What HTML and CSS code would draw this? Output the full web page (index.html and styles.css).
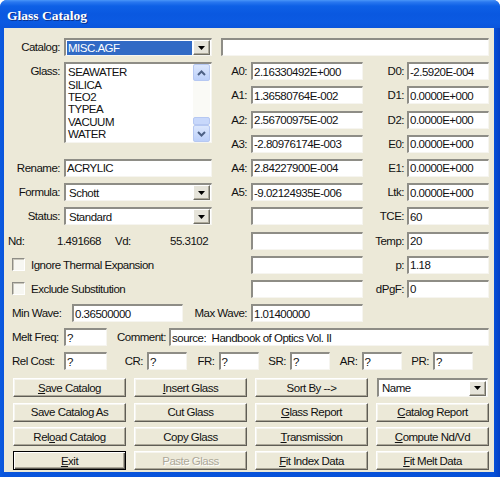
FILE: index.html
```html
<!DOCTYPE html>
<html>
<head>
<meta charset="utf-8">
<link rel="stylesheet" href="styles.css">
</head>
<body>
<div class="window">
  <div class="titlebar"><span class="title">Glass Catalog</span></div>
  <div class="client">
    <div class="form">
      <!-- row 0 -->
      <div class="lbl r0 c1">Catalog:</div>
      <div class="field combo r0 c2"><span class="sel">MISC.AGF</span><span class="ddbtn"><svg width="7" height="4" viewBox="0 0 7 4"><polygon points="0,0 7,0 3.5,4" fill="#000"/></svg></span></div>
      <div class="field desc r0 cdesc"></div>

      <!-- glass list -->
      <div class="lbl r1 c1">Glass:</div>
      <div class="listbox r1 c2 span4">
        <div class="items">
          <div>SEAWATER</div>
          <div>SILICA</div>
          <div>TEO2</div>
          <div>TYPEA</div>
          <div>VACUUM</div>
          <div>WATER</div>
        </div>
        <div class="vscroll">
          <span class="sbtn"><svg width="9" height="6" viewBox="0 0 9 6"><polyline points="1,5 4.5,1.5 8,5" fill="none" stroke="#4d6185" stroke-width="2"/></svg></span>
          <span class="track"><span class="thumb"></span></span>
          <span class="sbtn"><svg width="9" height="6" viewBox="0 0 9 6"><polyline points="1,1 4.5,4.5 8,1" fill="none" stroke="#4d6185" stroke-width="2"/></svg></span>
        </div>
      </div>

      <!-- A coefficients -->
      <div class="lbl mid r1 c3">A0:</div><div class="field r1 c4">2.16330492E+000</div>
      <div class="lbl mid r2 c3">A1:</div><div class="field r2 c4">1.36580764E-002</div>
      <div class="lbl mid r3 c3">A2:</div><div class="field r3 c4">2.56700975E-002</div>
      <div class="lbl mid r4 c3">A3:</div><div class="field r4 c4">-2.80976174E-003</div>
      <div class="lbl mid r5 c3">A4:</div><div class="field r5 c4">2.84227900E-004</div>
      <div class="lbl mid r6 c3">A5:</div><div class="field r6 c4">-9.02124935E-006</div>
      <div class="field r7 c4"></div>
      <div class="field r8 c4"></div>
      <div class="field r9 c4"></div>
      <div class="field r10 c4"></div>

      <!-- D / E column -->
      <div class="lbl right r1 c5">D0:</div><div class="field r1 c6">-2.5920E-004</div>
      <div class="lbl right r2 c5">D1:</div><div class="field r2 c6">0.0000E+000</div>
      <div class="lbl right r3 c5">D2:</div><div class="field r3 c6">0.0000E+000</div>
      <div class="lbl right r4 c5">E0:</div><div class="field r4 c6">0.0000E+000</div>
      <div class="lbl right r5 c5">E1:</div><div class="field r5 c6">0.0000E+000</div>
      <div class="lbl right r6 c5">Ltk:</div><div class="field r6 c6">0.0000E+000</div>
      <div class="lbl right r7 c5">TCE:</div><div class="field r7 c6">60</div>
      <div class="lbl right r8 c5">Temp:</div><div class="field r8 c6">20</div>
      <div class="lbl right r9 c5">p:</div><div class="field r9 c6">1.18</div>
      <div class="lbl right r10 c5">dPgF:</div><div class="field r10 c6">0</div>

      <!-- left lower -->
      <div class="lbl r5 c1">Rename:</div>
      <div class="field r5 c2">ACRYLIC</div>
      <div class="lbl r6 c1">Formula:</div>
      <div class="field combo r6 c2"><span class="ctext">Schott</span><span class="ddbtn"><svg width="7" height="4" viewBox="0 0 7 4"><polygon points="0,0 7,0 3.5,4" fill="#000"/></svg></span></div>
      <div class="lbl r7 c1">Status:</div>
      <div class="field combo r7 c2"><span class="ctext">Standard</span><span class="ddbtn"><svg width="7" height="4" viewBox="0 0 7 4"><polygon points="0,0 7,0 3.5,4" fill="#000"/></svg></span></div>

      <div class="ndvd r8 cleft">
        <span class="nd-l">Nd:</span><span class="nd-v">1.491668</span><span class="vd-l">Vd:</span><span class="vd-v">55.3102</span>
      </div>
      <div class="check r9 cleft"><span class="box"></span><span>Ignore Thermal Expansion</span></div>
      <div class="check r10 cleft"><span class="box"></span><span>Exclude Substitution</span></div>

      <!-- wave row -->
      <div class="line r11 call">
        <span class="ll minw">Min Wave:</span>
        <div class="field w-min">0.36500000</div>
        <span class="ll maxw">Max Wave:</span>
        <div class="field w-max">1.01400000</div>
      </div>

      <!-- melt / comment -->
      <div class="line r12 call">
        <span class="ll lead">Melt Freq:</span>
        <div class="field small">?</div>
        <span class="ll cmt">Comment:</span>
        <div class="field comment">source:&nbsp; Handbook of Optics Vol. II</div>
      </div>

      <!-- cost row -->
      <div class="line r13 call">
        <span class="ll lead">Rel Cost:</span>
        <div class="field small">?</div>
        <span class="ll grp first">CR:</span><div class="field tiny">?</div>
        <span class="ll grp">FR:</span><div class="field tiny">?</div>
        <span class="ll grp">SR:</span><div class="field tiny">?</div>
        <span class="ll grp">AR:</span><div class="field tiny">?</div>
        <span class="ll grp">PR:</span><div class="field tiny">?</div>
      </div>
    </div>

    <div class="buttons">
      <div class="btn"><span><u>S</u>ave Catalog</span></div>
      <div class="btn"><span><u>I</u>nsert Glass</span></div>
      <div class="btn"><span>Sort By --&gt;</span></div>
      <div class="field combo namecombo"><span class="ctext">Name</span><span class="ddbtn"><svg width="7" height="4" viewBox="0 0 7 4"><polygon points="0,0 7,0 3.5,4" fill="#000"/></svg></span></div>

      <div class="btn"><span>Save Catalog As</span></div>
      <div class="btn"><span>Cut Glass</span></div>
      <div class="btn"><span><u>G</u>lass Report</span></div>
      <div class="btn"><span><u>C</u>atalog Report</span></div>

      <div class="btn"><span>Rel<u>o</u>ad Catalog</span></div>
      <div class="btn"><span>Copy Glass</span></div>
      <div class="btn"><span><u>T</u>ransmission</span></div>
      <div class="btn"><span><u>C</u>ompute Nd/Vd</span></div>

      <div class="btn default"><span><u>E</u>xit</span></div>
      <div class="btn disabled"><span>Paste Glass</span></div>
      <div class="btn"><span><u>F</u>it Index Data</span></div>
      <div class="btn"><span><u>F</u>it Melt Data</span></div>
    </div>
  </div>
</div>
</body>
</html>
```

FILE: styles.css
```css
html, body {
  margin: 0;
  padding: 0;
  background: #ffffff;
}

.window {
  width: 500px;
  height: 477px;
  box-sizing: border-box;
  display: flex;
  flex-direction: column;
  border-radius: 7px 7px 0 0;
  background: linear-gradient(to right, #0b5ae0 0, #0a55dc 4px, #0650d8 494px, #0340c4 500px);
  overflow: hidden;
  font-family: "Liberation Sans", Arial, sans-serif;
  font-size: 11.5px;
  letter-spacing: -0.5px;
  color: #111;
}

.titlebar {
  height: 28px;
  flex: none;
  display: flex;
  align-items: center;
  padding-left: 7px;
  background: linear-gradient(to bottom, #4a96f8 0, #2a78f0 2px, #0e60e6 6px, #0a58e0 14px, #0b5ae2 22px, #0a55dc 28px);
}

.title {
  font-family: "Liberation Serif", "Times New Roman", serif;
  font-weight: bold;
  font-size: 13.5px;
  letter-spacing: 0;
  color: #ffffff;
  text-shadow: 1px 1px 0 #0a2f8a;
  margin-top: 4px;
}

.client {
  flex: 1;
  margin: 0 6px 5px 4px;
  background: #ece9d8;
  display: flex;
  flex-direction: column;
}

/* ---------- main form grid ---------- */
.form {
  display: grid;
  grid-template-columns: 60px 148px 39px 112px 44px 82px;
  grid-template-rows: repeat(14, 18px);
  row-gap: 6.2px;
  padding-top: 10px;
}

.r0 { grid-row: 1; }
.r1 { grid-row: 2; }
.r2 { grid-row: 3; }
.r3 { grid-row: 4; }
.r4 { grid-row: 5; }
.r5 { grid-row: 6; }
.r6 { grid-row: 7; }
.r7 { grid-row: 8; }
.r8 { grid-row: 9; }
.r9 { grid-row: 10; }
.r10 { grid-row: 11; }
.r11 { grid-row: 12; }
.r12 { grid-row: 13; }
.r13 { grid-row: 14; }

.c1 { grid-column: 1; }
.c2 { grid-column: 2; }
.c3 { grid-column: 3; }
.c4 { grid-column: 4; }
.c5 { grid-column: 5; }
.c6 { grid-column: 6; }
.cdesc { grid-column: 3 / 7; margin-left: 9px; }
.cleft { grid-column: 1 / 4; }
.call { grid-column: 1 / 7; }
.span4 { grid-row-end: span 4; }

.lbl {
  display: flex;
  align-items: center;
  justify-content: flex-end;
  padding-right: 4px;
  white-space: nowrap;
}
.lbl.right { padding-right: 3px; }

/* ---------- sunken edit field ---------- */
.field {
  box-sizing: border-box;
  height: 18px;
  background: #ffffff;
  border-style: solid;
  border-width: 2px 1px 1px 2px;
  border-color: #8e8d86 #f6f5f0 #f6f5f0 #8e8d86;
  padding: 0 1px;
  display: flex;
  align-items: center;
  white-space: nowrap;
  overflow: hidden;
}

.combo {
  position: relative;
  padding: 0 1px 0 1px;
}
.combo .sel {
  flex: 1;
  height: 14px;
  margin-right: 1px;
  background: #316ac5;
  color: #ffffff;
  display: flex;
  align-items: center;
  padding-left: 1px;
}
.combo .ctext {
  flex: 1;
  padding-left: 2px;
}
.ddbtn {
  flex: none;
  width: 17px;
  height: 15px;
  box-sizing: border-box;
  background: #e6e4da;
  border-style: solid;
  border-width: 1px;
  border-color: #ffffff #6f6e66 #6f6e66 #ffffff;
  box-shadow: inset -1px -1px 0 #aca899;
  display: flex;
  align-items: center;
  justify-content: center;
}

/* ---------- listbox ---------- */
.listbox {
  box-sizing: border-box;
  height: 81px;
  align-self: start;
  background: #ffffff;
  border-style: solid;
  border-width: 2px 1px 1px 2px;
  border-color: #8e8d86 #f6f5f0 #f6f5f0 #8e8d86;
  display: flex;
}
.items {
  flex: 1;
  padding: 2px 0 0 2px;
  line-height: 12.4px;
}
.vscroll {
  width: 17px;
  flex: none;
  display: flex;
  flex-direction: column;
  background: #fafaf6;
  margin-right: 1px;
}
.sbtn {
  height: 17px;
  flex: none;
  box-sizing: border-box;
  border: 1px solid #b6c8f2;
  border-radius: 2px;
  background: linear-gradient(to bottom, #dce7fd, #bcd0fa);
  display: flex;
  align-items: center;
  justify-content: center;
}
.track {
  flex: 1;
  display: flex;
  flex-direction: column;
  justify-content: flex-end;
}
.thumb {
  height: 8px;
  box-sizing: border-box;
  border: 1px solid #b6c8f2;
  border-radius: 2px;
  background: #c8d8fb;
}

/* ---------- Nd / Vd ---------- */
.ndvd {
  display: flex;
  align-items: center;
  padding-left: 4px;
  white-space: nowrap;
}
.nd-l { width: 49px; }
.nd-v { width: 58px; }
.vd-l { width: 55px; }

/* ---------- checkboxes ---------- */
.check {
  display: flex;
  align-items: center;
  padding-left: 8px;
  white-space: nowrap;
}
.box {
  width: 13px;
  height: 13px;
  box-sizing: border-box;
  margin-right: 6px;
  background: #f7f7f2;
  border-style: solid;
  border-width: 1px;
  border-color: #8e8d86 #ffffff #ffffff #8e8d86;
  box-shadow: inset 1px 1px 0 #c9c7bc;
}

/* ---------- single-line rows ---------- */
.line {
  display: flex;
  align-items: center;
  white-space: nowrap;
}
.ll {
  flex: none;
  display: flex;
  align-items: center;
}
.minw { width: 60px; padding-left: 8px; }
.w-min { width: 111px; }
.maxw { width: 68px; justify-content: flex-end; padding-right: 4px; box-sizing: border-box; }
.w-max { width: 112px; }

.lead { width: 52px; padding-left: 8px; }
.small { width: 43px; }
.cmt { width: 62px; justify-content: flex-end; padding-right: 3px; box-sizing: border-box; }
.comment { width: 320px; }

.grp { width: 31.5px; justify-content: flex-end; padding-right: 4px; box-sizing: border-box; }
.grp.first { width: 40px; }
.tiny { width: 40px; }

/* ---------- buttons ---------- */
.buttons {
  display: grid;
  grid-template-columns: repeat(4, 113px);
  grid-auto-rows: 19px;
  column-gap: 8px;
  row-gap: 5.3px;
  margin: 8px 0 0 9px;
}

.btn {
  box-sizing: border-box;
  background: #ece9d8;
  border-style: solid;
  border-width: 1px;
  border-color: #ffffff #5f5d55 #5f5d55 #ffffff;
  box-shadow: inset -1px -1px 0 #aca899, inset 1px 1px 0 #f6f5ef;
  display: flex;
  align-items: center;
  justify-content: center;
  white-space: nowrap;
}
.btn.default {
  border: 1px solid #000000;
  box-shadow: inset 1px 1px 0 #ffffff, inset -1px -1px 0 #5f5d55, inset -2px -2px 0 #aca899;
}
.btn.disabled {
  color: #aca899;
  text-shadow: 1px 1px 0 #ffffff;
}

.namecombo {
  height: 19px;
  width: 111px;
  margin-left: 1px;
}
```
